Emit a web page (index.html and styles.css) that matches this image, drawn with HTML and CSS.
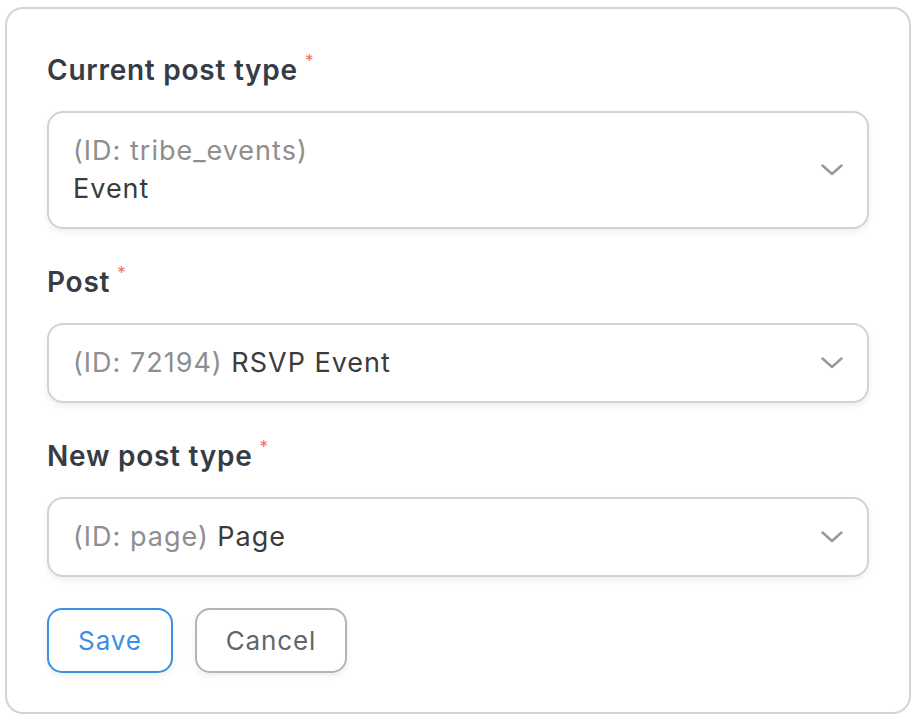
FILE: index.html
```html
<!DOCTYPE html>
<html lang="en">

<head>
    <meta charset="UTF-8">
    <meta name="viewport" content="width=device-width, initial-scale=1.0">
    <title>Change post type</title>
    <link rel="stylesheet" href="styles.css">
</head>

<body>
    <form class="card">
        <div class="field">
            <label class="label">Current post type<span class="req">*</span></label>
            <div class="select">
                <div class="select-value">
                    <div class="muted">(ID: tribe_events)</div>
                    <div>Event</div>
                </div>
                <svg class="chevron" width="22" height="12" viewBox="0 0 22 12"><path d="M1.5 1.5 L11 10 L20.5 1.5" /></svg>
            </div>
        </div>

        <div class="field">
            <label class="label">Post<span class="req">*</span></label>
            <div class="select">
                <div class="select-value"><span class="muted">(ID: 72194)</span> RSVP Event</div>
                <svg class="chevron" width="22" height="12" viewBox="0 0 22 12"><path d="M1.5 1.5 L11 10 L20.5 1.5" /></svg>
            </div>
        </div>

        <div class="field">
            <label class="label">New post type<span class="req">*</span></label>
            <div class="select">
                <div class="select-value"><span class="muted">(ID: page)</span> Page</div>
                <svg class="chevron" width="22" height="12" viewBox="0 0 22 12"><path d="M1.5 1.5 L11 10 L20.5 1.5" /></svg>
            </div>
        </div>

        <div class="actions">
            <button type="button" class="btn btn-save">Save</button>
            <button type="button" class="btn btn-cancel">Cancel</button>
        </div>
    </form>
</body>

</html>
```

FILE: styles.css
```css
body {
    margin: 0;
    padding: 7px 7px 6px 5px;
    background-color: #fff;
    font-family: Inter, 'Noto Sans', sans-serif;
}

.card {
    box-sizing: border-box;
    height: 707px;
    border: 2px solid #d4d4d4;
    border-radius: 18px;
    padding: 44px 40px 0 40px;
    display: flex;
    flex-direction: column;
    gap: 36px;
}

.field {
    display: flex;
    flex-direction: column;
    gap: 24px;
}

.label {
    font-size: 28px;
    line-height: 34px;
    font-weight: 600;
    letter-spacing: 0.75px;
    color: #363c45;
}

.req {
    font-size: 17px;
    line-height: 1;
    font-weight: 400;
    color: #ef6b6b;
    vertical-align: top;
    margin-left: 7px;
}

.select {
    display: flex;
    align-items: center;
    border: 2px solid #d2d2d2;
    border-radius: 16px;
    padding: 19px 24px 19px 24px;
    box-shadow: 0 3px 6px rgba(0, 0, 0, 0.07);
    font-size: 27px;
    line-height: 38px;
    letter-spacing: 1px;
    color: #3b3b3b;
}

.select-value {
    flex: 1;
}

.muted {
    color: #8e8e8e;
}

.chevron {
    fill: none;
    stroke: #9a9a9a;
    stroke-width: 2.5;
    stroke-linecap: round;
    stroke-linejoin: round;
}

.actions {
    display: flex;
    gap: 22px;
    margin-top: -5px;
}

.btn {
    height: 65px;
    padding: 0;
    border-radius: 15px;
    background-color: #fff;
    font-family: Inter, 'Noto Sans', sans-serif;
    font-size: 26px;
    letter-spacing: 0.9px;
    box-shadow: 0 3px 6px rgba(0, 0, 0, 0.07);
}

.btn-save {
    width: 126px;
    border: 2px solid #3b8fe3;
    color: #3b8fe3;
}

.btn-cancel {
    width: 152px;
    border: 2px solid #b4b4b4;
    color: #5f6670;
}
```
